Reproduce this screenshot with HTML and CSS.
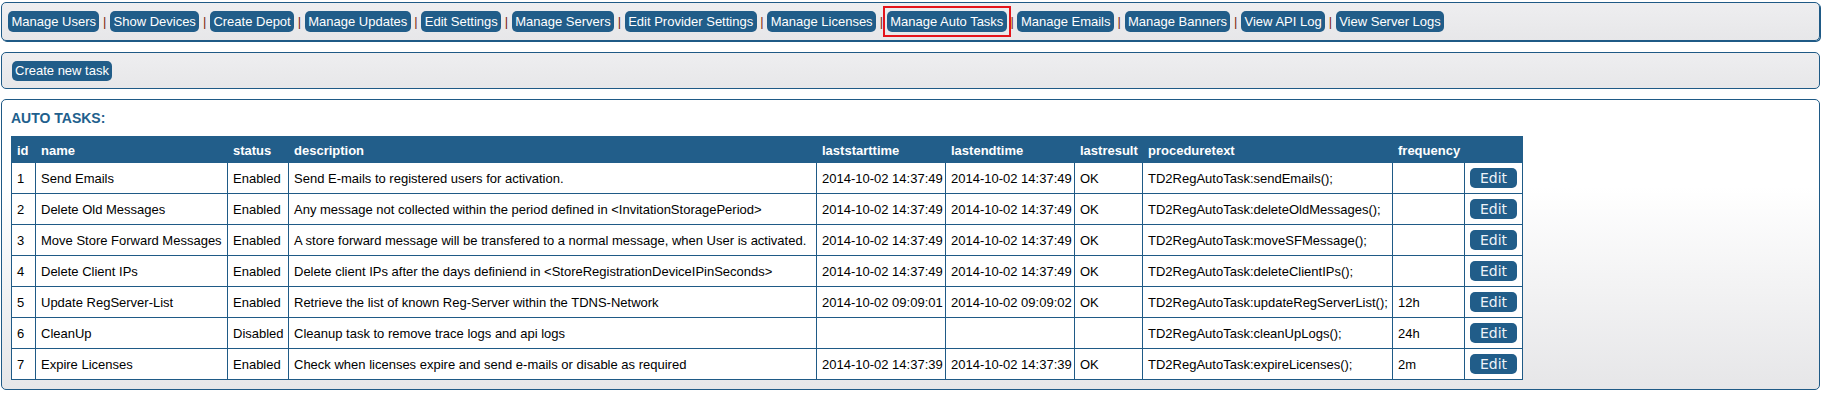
FILE: index.html
```html
<!DOCTYPE html>
<html>
<head>
<meta charset="utf-8">
<title>Manage Auto Tasks</title>
<link rel="stylesheet" href="styles.css">
</head>
<body>
<div class="page">
  <div class="panel nav">
    <a class="btn">Manage Users</a> <span class="sep">|</span> <a class="btn">Show Devices</a> <span class="sep">|</span> <a class="btn">Create Depot</a> <span class="sep">|</span> <a class="btn">Manage Updates</a> <span class="sep">|</span> <a class="btn">Edit Settings</a> <span class="sep">|</span> <a class="btn">Manage Servers</a> <span class="sep">|</span> <a class="btn">Edit Provider Settings</a> <span class="sep">|</span> <a class="btn">Manage Licenses</a> <span class="sep">|</span> <a class="btn active">Manage Auto Tasks</a> <span class="sep">|</span> <a class="btn">Manage Emails</a> <span class="sep">|</span> <a class="btn">Manage Banners</a> <span class="sep">|</span> <a class="btn">View API Log</a> <span class="sep">|</span> <a class="btn">View Server Logs</a>
  </div>

  <div class="panel toolbar">
    <a class="btn">Create new task</a>
  </div>

  <div class="panel tasks">
    <h2 class="title">AUTO TASKS:</h2>
    <table class="grid">
      <colgroup>
        <col class="c-id"><col class="c-name"><col class="c-status"><col class="c-desc"><col class="c-time"><col class="c-time"><col class="c-result"><col class="c-proc"><col class="c-freq"><col class="c-act">
      </colgroup>
      <thead>
        <tr>
          <th>id</th><th>name</th><th>status</th><th>description</th><th>laststarttime</th><th>lastendtime</th><th>lastresult</th><th>proceduretext</th><th>frequency</th><th></th>
        </tr>
      </thead>
      <tbody>
        <tr>
          <td>1</td><td>Send Emails</td><td>Enabled</td><td>Send E-mails to registered users for activation.</td><td>2014-10-02 14:37:49</td><td>2014-10-02 14:37:49</td><td>OK</td><td>TD2RegAutoTask:sendEmails();</td><td></td><td class="act"><button class="edit">Edit</button></td>
        </tr>
        <tr>
          <td>2</td><td>Delete Old Messages</td><td>Enabled</td><td>Any message not collected within the period defined in &lt;InvitationStoragePeriod&gt;</td><td>2014-10-02 14:37:49</td><td>2014-10-02 14:37:49</td><td>OK</td><td>TD2RegAutoTask:deleteOldMessages();</td><td></td><td class="act"><button class="edit">Edit</button></td>
        </tr>
        <tr>
          <td>3</td><td>Move Store Forward Messages</td><td>Enabled</td><td>A store forward message will be transfered to a normal message, when User is activated.</td><td>2014-10-02 14:37:49</td><td>2014-10-02 14:37:49</td><td>OK</td><td>TD2RegAutoTask:moveSFMessage();</td><td></td><td class="act"><button class="edit">Edit</button></td>
        </tr>
        <tr>
          <td>4</td><td>Delete Client IPs</td><td>Enabled</td><td>Delete client IPs after the days definiend in &lt;StoreRegistrationDeviceIPinSeconds&gt;</td><td>2014-10-02 14:37:49</td><td>2014-10-02 14:37:49</td><td>OK</td><td>TD2RegAutoTask:deleteClientIPs();</td><td></td><td class="act"><button class="edit">Edit</button></td>
        </tr>
        <tr>
          <td>5</td><td>Update RegServer-List</td><td>Enabled</td><td>Retrieve the list of known Reg-Server within the TDNS-Network</td><td>2014-10-02 09:09:01</td><td>2014-10-02 09:09:02</td><td>OK</td><td>TD2RegAutoTask:updateRegServerList();</td><td>12h</td><td class="act"><button class="edit">Edit</button></td>
        </tr>
        <tr>
          <td>6</td><td>CleanUp</td><td>Disabled</td><td>Cleanup task to remove trace logs and api logs</td><td></td><td></td><td></td><td>TD2RegAutoTask:cleanUpLogs();</td><td>24h</td><td class="act"><button class="edit">Edit</button></td>
        </tr>
        <tr>
          <td>7</td><td>Expire Licenses</td><td>Enabled</td><td>Check when licenses expire and send e-mails or disable as required</td><td>2014-10-02 14:37:39</td><td>2014-10-02 14:37:39</td><td>OK</td><td>TD2RegAutoTask:expireLicenses();</td><td>2m</td><td class="act"><button class="edit">Edit</button></td>
        </tr>
      </tbody>
    </table>
  </div>
</div>
</body>
</html>
```
FILE: styles.css
```css
body {
  margin: 0;
  background: #ffffff;
  font-family: "Liberation Sans", Arial, sans-serif;
  font-size: 13px;
  color: #000;
}

.page {
  padding: 2px 2px 0 1px;
}

.panel {
  border: 1px solid #1f5a86;
  border-radius: 5px;
  background: linear-gradient(#eeeef0, #e7e7e9);
}

.nav {
  padding: 8px 6px;
  line-height: 21px;
  box-shadow: 1px 1px 0 #1f5a86;
  white-space: nowrap;
}

.btn {
  display: inline-block;
  position: relative;
  height: 21px;
  line-height: 21px;
  padding: 0 3px;
  background: #215d89;
  color: #ffffff;
  border-radius: 5px;
  vertical-align: top;
}

.nav .btn {
  padding: 0 3.45px;
}

.btn.active::after {
  content: "";
  position: absolute;
  top: -5px;
  bottom: -5px;
  left: -4px;
  right: -4px;
  border: 2px solid #e4141b;
}

.sep {
  color: #7c2412;
}

.toolbar {
  margin-top: 11px;
  padding: 8px 10px 7px;
  line-height: 20px;
}

.toolbar .btn {
  height: 20px;
  line-height: 20px;
}

.tasks {
  margin-top: 10px;
  padding: 10px 9px 9px;
  background: linear-gradient(#ffffff 30%, #e6e6e8);
}

.title {
  margin: 0 0 10px;
  font-size: 14px;
  line-height: 16px;
  font-weight: bold;
  color: #215f8d;
}

.grid {
  border-collapse: collapse;
  table-layout: fixed;
  width: 1511px;
  border: 1px solid #1f5a86;
  background: #ffffff;
}

.c-id { width: 24px; }
.c-name { width: 192px; }
.c-status { width: 61px; }
.c-desc { width: 528px; }
.c-time { width: 129px; }
.c-result { width: 68px; }
.c-proc { width: 250px; }
.c-freq { width: 72px; }
.c-act { width: 58px; }

.grid th {
  background: #225e8a;
  color: #ffffff;
  font-weight: bold;
  text-align: left;
  padding: 6px 5px 4px;
  line-height: 15px;
  border: 1px solid #225e8a;
  white-space: nowrap;
  overflow: visible;
}

.grid td {
  border: 1px solid #1f5a86;
  padding: 8px 5px 6px;
  line-height: 16px;
  white-space: nowrap;
  vertical-align: middle;
  overflow: visible;
}

.grid td.act {
  padding: 5px;
}

.edit {
  display: block;
  height: 20px;
  line-height: 20px;
  padding: 0 10px;
  margin: 0;
  border: none;
  border-radius: 5px;
  background: #215d89;
  color: #eef3f8;
  font-family: "DejaVu Sans", sans-serif;
  font-size: 14px;
}
```
